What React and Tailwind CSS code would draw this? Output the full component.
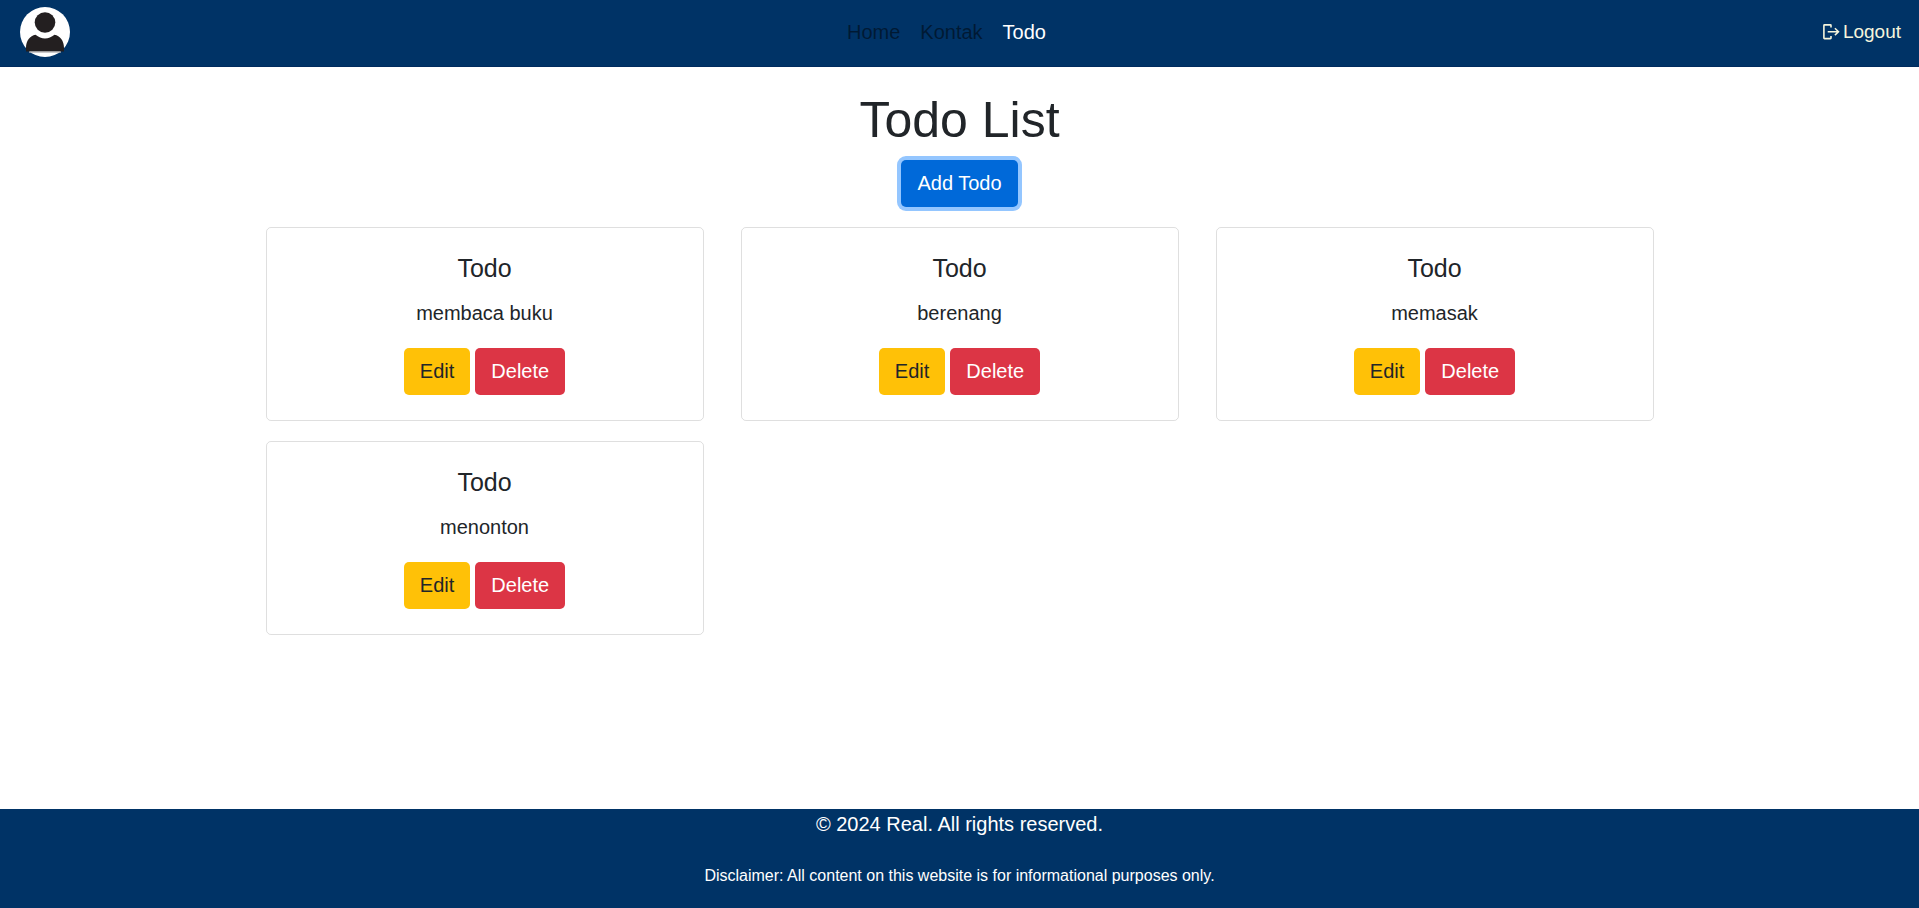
const links = [
  { label: "Home", active: false },
  { label: "Kontak", active: false },
  { label: "Todo", active: true },
];

const todos = ["membaca buku", "berenang", "memasak", "menonton"];

function Avatar() {
  return (
    <svg viewBox="0 0 50 50" className="size-[50px]" aria-hidden="true">
      <circle cx="25" cy="25" r="25" fill="#fff" />
      <circle cx="25" cy="15.5" r="10.3" fill="#231f20" />
      <path
        d="M6 44.600V41C6 33.500 10 29 15.500 27.800Q20 31.500 25 31.500T34.500 27.800C40 29 44 33.500 44 41V44.600Z"
        fill="#231f20"
      />
      <path d="M9 45.200H41" stroke="#b5b3b4" strokeWidth="1" />
    </svg>
  );
}

function LogoutIcon() {
  return (
    <svg viewBox="0 0 17 16" className="h-4 w-[17px]" fill="none" stroke="currentColor" aria-hidden="true">
      <path d="M8 3.500V1.500Q8 0.900 7.400 0.900H1.500Q0.900 0.900 0.900 1.500V14Q0.900 14.600 1.500 14.600H7.400Q8 14.600 8 14V12" strokeWidth="1.600" />
      <path d="M4.700 7.700H15.500M11.900 4.300L15.500 7.700L11.900 11.100" strokeWidth="1.500" />
    </svg>
  );
}

function Navbar() {
  return (
    <header className="flex items-center justify-between border-b border-[#002b5e] bg-[#003366] pt-[7px] pr-[18px] pb-[9px] pl-5">
      <a href="#profile" aria-label="Profile">
        <Avatar />
      </a>
      <nav className="flex gap-5">
        {links.map((l) => (
          <a key={l.label} href={"#" + l.label} className={l.active ? "text-white" : "text-black/50"}>
            {l.label}
          </a>
        ))}
      </nav>
      <a href="#logout" className="flex items-center gap-[3px] text-[19px] text-[#f5f5dc]">
        <LogoutIcon />
        Logout
      </a>
    </header>
  );
}

function TodoCard({ text }) {
  return (
    <article className="rounded-[5px] border border-black/[.125] p-[25px] text-center">
      <h2 className="mb-[15px] text-[25px] leading-[30px]">Todo</h2>
      <p className="mb-5">{text}</p>
      <div className="flex justify-center gap-[5px]">
        <button className="rounded-[5px] bg-[#ffc107] px-4 pt-2 pb-[9px]">Edit</button>
        <button className="rounded-[5px] bg-[#dc3545] px-4 pt-2 pb-[9px] text-white">Delete</button>
      </div>
    </article>
  );
}

export default function App() {
  return (
    <div className="flex min-h-screen flex-col bg-white font-['Liberation_Sans',Arial,sans-serif] text-[20px] leading-[30px] text-[#212529]">
      <Navbar />
      <main className="mx-auto flex w-full max-w-[1388px] flex-col items-center pt-[23px]">
        <h1 className="mb-[10px] text-[50px] leading-[60px]">Todo List</h1>
        <button className="mb-5 rounded-[5px] bg-[#0069d9] px-4 pt-2 pb-[9px] text-white ring-4 ring-[#94c6ff]">
          Add Todo
        </button>
        <section className="grid w-full grid-cols-3 gap-x-[37px] gap-y-5">
          {todos.map((t) => (
            <TodoCard key={t} text={t} />
          ))}
        </section>
      </main>
      <footer className="mt-auto bg-[#003366] pb-[17px] text-center text-white">
        <p className="mb-5">© 2024 Real. All rights reserved.</p>
        <p>
          <small className="text-[16px]">
            Disclaimer: All content on this website is for informational purposes only.
          </small>
        </p>
      </footer>
    </div>
  );
}
